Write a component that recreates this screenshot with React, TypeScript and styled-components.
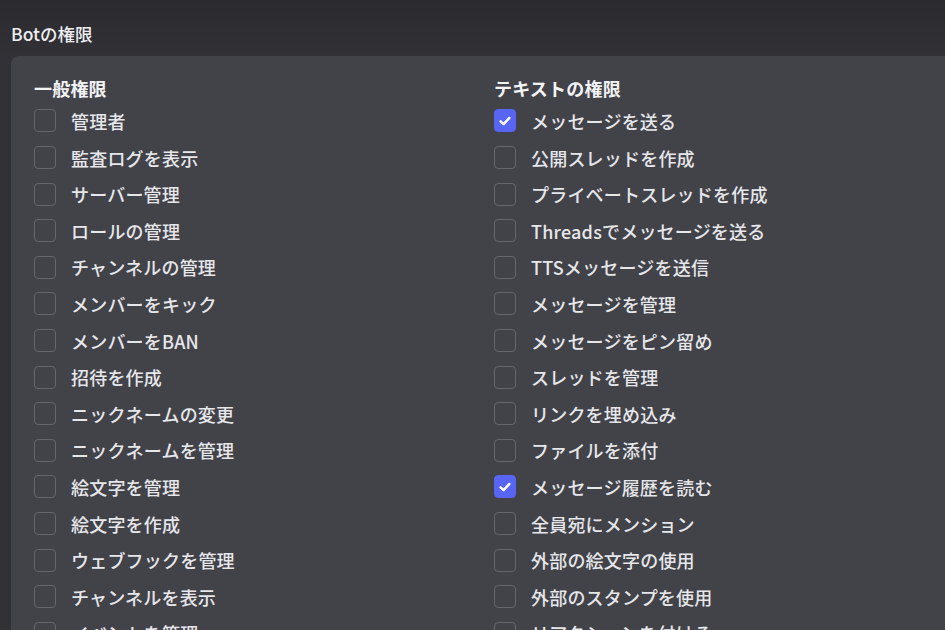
import React from "react";
import styled, { createGlobalStyle } from "styled-components";

const Global = createGlobalStyle`
  html, body { margin: 0; padding: 0; height: 100%; overflow: hidden; }
  body {
    background: linear-gradient(180deg, #2b2b2f 0px, #313136 60px, #313136 100%);
    font-family: "Noto Sans CJK JP", "Noto Sans", sans-serif;
    color: #e3e4e8;
  }
`;

const Page = styled.div`
  padding: 23px 0 0 11px;
`;

const Title = styled.div`
  font-size: 17.5px;
  line-height: 22px;
  font-weight: 500;
  color: #eceef1;
  margin-bottom: 11px;
`;

const Panel = styled.div`
  background: #424249;
  border-radius: 8px 0 0 0;
  padding: 20px 0 20px 23px;
  width: 1000px;
  display: grid;
  grid-template-columns: 460px 460px;
`;

const Column = styled.div`
  display: flex;
  flex-direction: column;
`;

const Heading = styled.div`
  font-size: 18px;
  line-height: 24px;
  font-weight: 700;
  color: #f2f3f5;
  letter-spacing: 0.2px;
  margin-bottom: 2.7px;
`;

const Row = styled.label`
  display: flex;
  align-items: center;
  height: 36.6px;
  gap: 15px;
`;

const Box = styled.span<{ $checked: boolean }>`
  box-sizing: border-box;
  width: 22px;
  height: 23px;
  border-radius: 4px;
  flex: none;
  display: flex;
  align-items: center;
  justify-content: center;
  border: 1px solid ${(p) => (p.$checked ? "#5865f2" : "#64666e")};
  background: ${(p) => (p.$checked ? "#5865f2" : "transparent")};
`;

const Label = styled.span`
  font-size: 18px;
  line-height: 24px;
  font-weight: 500;
  letter-spacing: 0.2px;
  color: #e6e7ea;
  white-space: nowrap;
`;

const general = [
  "管理者",
  "監査ログを表示",
  "サーバー管理",
  "ロールの管理",
  "チャンネルの管理",
  "メンバーをキック",
  "メンバーをBAN",
  "招待を作成",
  "ニックネームの変更",
  "ニックネームを管理",
  "絵文字を管理",
  "絵文字を作成",
  "ウェブフックを管理",
  "チャンネルを表示",
  "イベントを管理",
];

const text = [
  "メッセージを送る",
  "公開スレッドを作成",
  "プライベートスレッドを作成",
  "Threadsでメッセージを送る",
  "TTSメッセージを送信",
  "メッセージを管理",
  "メッセージをピン留め",
  "スレッドを管理",
  "リンクを埋め込み",
  "ファイルを添付",
  "メッセージ履歴を読む",
  "全員宛にメンション",
  "外部の絵文字の使用",
  "外部のスタンプを使用",
  "リアクションを付ける",
];

const checkedText = new Set(["メッセージを送る", "メッセージ履歴を読む"]);

const Check = () => (
  <svg width="14" height="14" viewBox="0 0 14 14" fill="none">
    <path d="M2.6 7.3 L5.6 10.1 L11.4 3.9" stroke="#fff" strokeWidth="2.4" strokeLinecap="round" strokeLinejoin="round" />
  </svg>
);

const Item = ({ label, checked }: { label: string; checked: boolean }) => (
  <Row>
    <Box $checked={checked}>{checked && <Check />}</Box>
    <Label>{label}</Label>
  </Row>
);

export default function App() {
  return (
    <>
      <Global />
      <Page>
        <Title>Botの権限</Title>
        <Panel>
          <Column>
            <Heading>一般権限</Heading>
            {general.map((l) => (
              <Item key={l} label={l} checked={false} />
            ))}
          </Column>
          <Column>
            <Heading>テキストの権限</Heading>
            {text.map((l) => (
              <Item key={l} label={l} checked={checkedText.has(l)} />
            ))}
          </Column>
        </Panel>
      </Page>
    </>
  );
}
